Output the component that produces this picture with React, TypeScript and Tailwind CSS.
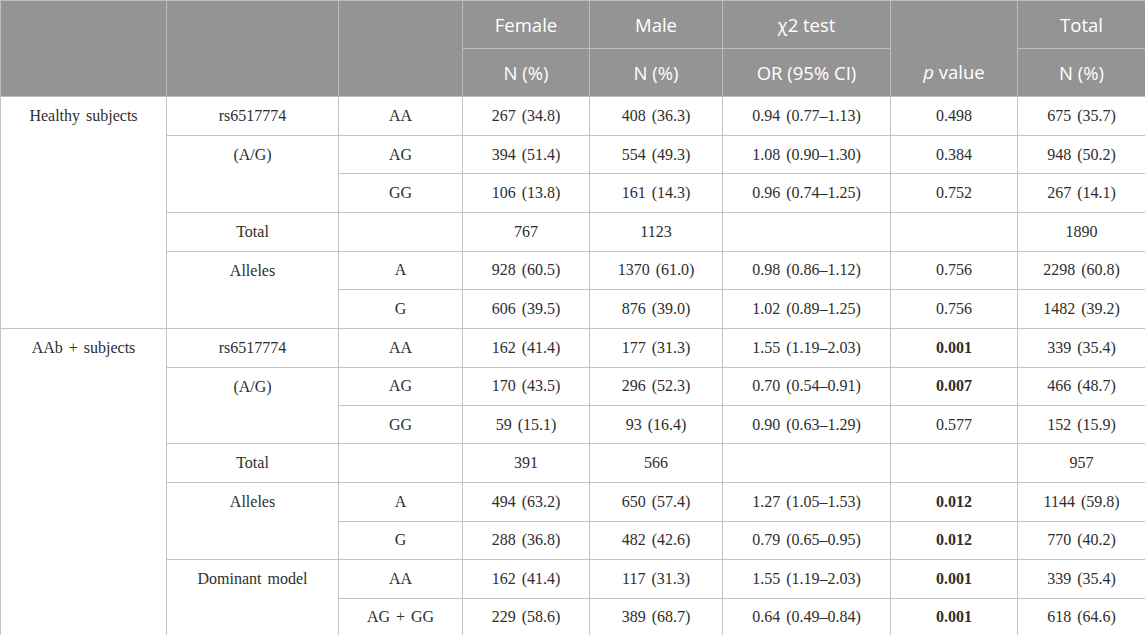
import React from 'react';

type Row = {
    group?: { label: string; span: number };
    snp?: { label: string; span: number };
    genotype: string;
    female: string;
    male: string;
    or: string;
    p: string;
    bold?: boolean;
    total: string;
};

// Body rows of the table; cells with a span open a merged block
const ROWS: Row[] = [
    { group: { label: 'Healthy subjects', span: 6 }, snp: { label: 'rs6517774', span: 1 }, genotype: 'AA', female: '267 (34.8)', male: '408 (36.3)', or: '0.94 (0.77–1.13)', p: '0.498', total: '675 (35.7)' },
    { snp: { label: '(A/G)', span: 2 }, genotype: 'AG', female: '394 (51.4)', male: '554 (49.3)', or: '1.08 (0.90–1.30)', p: '0.384', total: '948 (50.2)' },
    { genotype: 'GG', female: '106 (13.8)', male: '161 (14.3)', or: '0.96 (0.74–1.25)', p: '0.752', total: '267 (14.1)' },
    { snp: { label: 'Total', span: 1 }, genotype: '', female: '767', male: '1123', or: '', p: '', total: '1890' },
    { snp: { label: 'Alleles', span: 2 }, genotype: 'A', female: '928 (60.5)', male: '1370 (61.0)', or: '0.98 (0.86–1.12)', p: '0.756', total: '2298 (60.8)' },
    { genotype: 'G', female: '606 (39.5)', male: '876 (39.0)', or: '1.02 (0.89–1.25)', p: '0.756', total: '1482 (39.2)' },
    { group: { label: 'AAb + subjects', span: 8 }, snp: { label: 'rs6517774', span: 1 }, genotype: 'AA', female: '162 (41.4)', male: '177 (31.3)', or: '1.55 (1.19–2.03)', p: '0.001', bold: true, total: '339 (35.4)' },
    { snp: { label: '(A/G)', span: 2 }, genotype: 'AG', female: '170 (43.5)', male: '296 (52.3)', or: '0.70 (0.54–0.91)', p: '0.007', bold: true, total: '466 (48.7)' },
    { genotype: 'GG', female: '59 (15.1)', male: '93 (16.4)', or: '0.90 (0.63–1.29)', p: '0.577', total: '152 (15.9)' },
    { snp: { label: 'Total', span: 1 }, genotype: '', female: '391', male: '566', or: '', p: '', total: '957' },
    { snp: { label: 'Alleles', span: 2 }, genotype: 'A', female: '494 (63.2)', male: '650 (57.4)', or: '1.27 (1.05–1.53)', p: '0.012', bold: true, total: '1144 (59.8)' },
    { genotype: 'G', female: '288 (36.8)', male: '482 (42.6)', or: '0.79 (0.65–0.95)', p: '0.012', bold: true, total: '770 (40.2)' },
    { snp: { label: 'Dominant model', span: 2 }, genotype: 'AA', female: '162 (41.4)', male: '117 (31.3)', or: '1.55 (1.19–2.03)', p: '0.001', bold: true, total: '339 (35.4)' },
    { genotype: 'AG + GG', female: '229 (58.6)', male: '389 (68.7)', or: '0.64 (0.49–0.84)', p: '0.001', bold: true, total: '618 (64.6)' },
];

const TH = 'border border-[#bdbdbd] bg-[#949494] p-0 text-center font-normal';
const TD = 'border border-[#c4c4c4] p-0 text-center align-middle';

export default function App() {
    return (
        <div className="w-[1145px] h-[635px] bg-white overflow-hidden">
            <table className="w-[1145px] border-collapse table-fixed border border-[#c4c4c4]">
                <colgroup>
                    <col className="w-[166px]" />
                    <col className="w-[172px]" />
                    <col className="w-[124px]" />
                    <col className="w-[127px]" />
                    <col className="w-[133px]" />
                    <col className="w-[168px]" />
                    <col className="w-[127px]" />
                    <col className="w-[128px]" />
                </colgroup>
                <thead className="font-['Open_Sans',sans-serif] text-[18.5px] text-white">
                    <tr className="h-[48px]">
                        <th rowSpan={2} className={TH} />
                        <th rowSpan={2} className={TH} />
                        <th rowSpan={2} className={TH} />
                        <th className={TH}>Female</th>
                        <th className={TH}>Male</th>
                        <th className={TH}>χ2 test</th>
                        <th rowSpan={2} className={`${TH} align-bottom`}>
                            <div className="leading-[48px]">
                                <i>p</i> value
                            </div>
                        </th>
                        <th className={TH}>Total</th>
                    </tr>
                    <tr className="h-[48px]">
                        <th className={TH}>N (%)</th>
                        <th className={TH}>N (%)</th>
                        <th className={TH}>OR (95% CI)</th>
                        <th className={TH}>N (%)</th>
                    </tr>
                </thead>
                <tbody className="font-['Liberation_Serif',serif] text-[16px] text-[#2e2e2e] [word-spacing:2px]">
                    {ROWS.map((r, i) => (
                        <tr key={i} className="h-[38.4px]">
                            {r.group && (
                                <td rowSpan={r.group.span} className={`${TD} align-top`}>
                                    <div className="leading-[38px]">{r.group.label}</div>
                                </td>
                            )}
                            {r.snp && (
                                <td rowSpan={r.snp.span} className={`${TD} align-top`}>
                                    <div className="leading-[38px]">{r.snp.label}</div>
                                </td>
                            )}
                            <td className={TD}>{r.genotype}</td>
                            <td className={TD}>{r.female}</td>
                            <td className={TD}>{r.male}</td>
                            <td className={TD}>{r.or}</td>
                            <td className={`${TD} ${r.bold ? 'font-bold' : ''}`}>{r.p}</td>
                            <td className={TD}>{r.total}</td>
                        </tr>
                    ))}
                </tbody>
            </table>
        </div>
    );
}
